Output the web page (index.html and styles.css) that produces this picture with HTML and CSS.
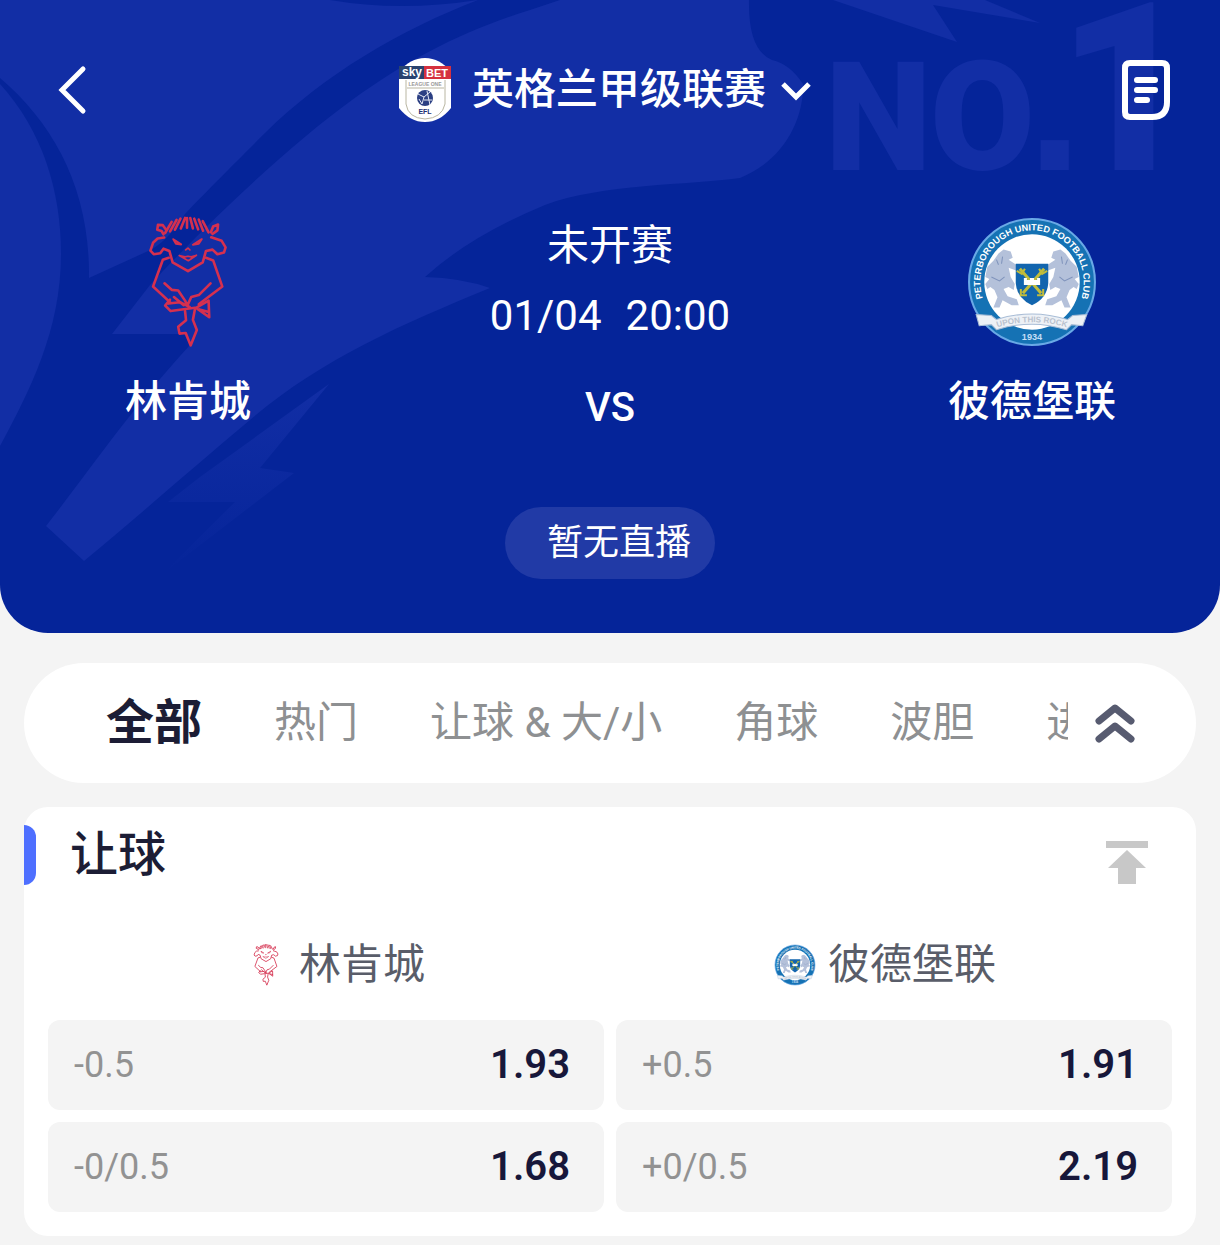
FILE: index.html
```html
<!DOCTYPE html>
<html lang="zh-CN">
  <head>
    <meta charset="UTF-8" />
    <meta name="viewport" content="width=device-width, initial-scale=1.0" />
    <title>林肯城 VS 彼德堡联</title>
    <link rel="stylesheet" href="styles.css">
  </head>
  <body>
    <header class="hero">
      <svg class="hero-bg" viewBox="0 0 1220 633" preserveAspectRatio="xMidYMin slice" aria-hidden="true">
        <defs>
          <linearGradient id="fade" x1="0" y1="0" x2="0" y2="1">
            <stop offset="0" stop-color="#122ea5" />
            <stop offset="1" stop-color="#122ea5" stop-opacity="0" />
          </linearGradient>
        </defs>
        <g fill="#122ea5">
          <path d="M0 84C42 130 61 190 61 254C61 330 30 390 0 446Z" />
          <path d="M0 0H330Q400 12 478 0C400 30 325 74 265 133C230 168 208 190 185 214Q166 244 146 252L89 278C90 190 55 125 0 78Z" />
          <path d="M112 334L150 285C210 220 290 145 352 100C410 58 465 30 530 10L560 0H749Q748 50 772 60Q790 64 803 84C804 118 785 160 740 178C690 185 600 184 545 205Q470 236 425 277Q462 278 490 288C400 325 320 360 250 420C190 470 140 515 84 561L46 526C90 470 130 410 190 345L184 334Z" />
          <path d="M833 0L957 42L933 5L1040 23L985 0Z" />
          <text class="no1" x="825" y="170">N<tspan x="930">O</tspan><tspan class="no1-dot" x="1027">.</tspan><tspan class="no1-big" x="1057">1</tspan></text>
        </g>
        <path fill="url(#fade)" d="M329 384L260 468L294 473L160 576L235 502H168L200 477Z" />
      </svg>

      <nav class="topbar">
        <button class="icon-btn" aria-label="返回">
          <svg width="48" height="60" viewBox="0 0 48 60" fill="none" stroke="#fff" stroke-width="5" stroke-linecap="round"><path d="M33 9L12 30L33 51" /></svg>
        </button>
        <button class="league">
          <svg width="54" height="64" viewBox="0 0 54 64">
            <path d="M1 14Q12 0 27 0Q42 0 53 14V50Q42 64 27 64Q12 64 1 50Z" fill="#fff" />
            <path d="M1 8H26V21H1Z" fill="#29436f" />
            <path d="M26 8H53V21H26Z" fill="#d5313f" />
            <text class="crest-text" x="4" y="18" font-size="12" fill="#fff">sky</text>
            <text class="crest-text" x="28" y="19" font-size="11" fill="#fff">BET</text>
            <text class="crest-text" x="27" y="28" font-size="5" fill="#999" text-anchor="middle">LEAGUE ONE</text>
            <path d="M8 22V46Q10 60 27 61Q44 60 47 46V22M9 30H46" fill="none" stroke="#b9b6a2" stroke-width="1" />
            <circle cx="27" cy="40" r="8" fill="#2b3f83" />
            <path d="M20 36L26 39L24 46M26 39L32 34M26 42L34 42M21 41L24 46M29 33L32 47" stroke="#e5e9f4" stroke-width="1" fill="none" />
            <text class="crest-text" x="27" y="56" font-size="7" fill="#1e2f72" text-anchor="middle">EFL</text>
          </svg>
          <span class="league-name">英格兰甲级联赛</span>
          <svg width="42" height="30" viewBox="0 0 42 30" fill="none" stroke="#fff" stroke-width="5"><path d="M3 9L16 22L29 9" /></svg>
        </button>
        <button class="icon-btn" aria-label="注单">
          <svg width="48" height="60" viewBox="0 0 48 60" fill="none" stroke="#fff" stroke-width="6" stroke-linecap="round"><path d="M8 3H40Q45 3 45 8V42Q45 57 30 57H8Q3 57 3 52V8Q3 3 8 3ZM15 20H33M15 30H33M15 40H25" /></svg>
        </button>
      </nav>

      <div class="match">
        <div class="team">
          <svg class="team-logo" viewBox="112 44 246 404">
            <g id="lincoln" fill="none" stroke="#d5304f" stroke-width="8" stroke-linejoin="round" stroke-linecap="round">
              <path d="M165 96L185 62M180 91L200 56M195 86L212 52M213 82L226 50M232 80V50M250 82L242 50M266 85L254 52M281 89L268 55M298 94L280 60" />
              <path d="M160 100L154 90L141 86L143 71L158 72L168 86M305 94L312 76L327 70L325 88L310 99" />
              <path d="M162 110L142 113L128 126L120 150L130 161L150 158L160 144L178 151L188 186L235 213L280 186L290 151L310 147L325 161L345 156L350 140L338 120L306 109" />
              <path d="M190 115L214 131L198 129ZM277 115L250 132L268 129Z" stroke-width="6" />
              <path d="M228 148L235 142L241 148M208 165L226 169L235 167L245 169L261 164L236 181Z" stroke-width="5" />
              <path d="M176 172L158 178L128 260L182 310M290 172L312 180L340 260L268 314" />
              <path d="M163 250L185 270L205 272L226 303L233 318M304 250L268 286L245 292L234 316M192 292L222 317" />
              <path d="M180 300L165 318L182 335L262 324L298 303L300 354L262 327M175 312L210 308L240 322M270 330L298 338" />
              <path d="M226 335L229 363L205 383L209 404L228 402L243 440L262 393L250 362L256 330" />
            </g>
          </svg>
          <span class="team-name">林肯城</span>
        </div>
        <div class="info">
          <p>未开赛</p>
          <p class="time"><span>01/04</span><span>20:00</span></p>
          <p class="vs">VS</p>
        </div>
        <div class="team">
          <svg class="team-logo" viewBox="0 0 130 130">
            <g id="peterborough">
              <circle cx="65" cy="65" r="62" fill="#1572b4" stroke="#69a9e6" stroke-width="2" />
              <circle cx="65" cy="65" r="47" fill="#fff" />
              <path id="ring" d="M18 85A51 51 0 1 1 112 85" fill="none" />
              <text class="crest-text" font-size="9" fill="#fff" text-anchor="middle">
                <textPath href="#ring" startOffset="50%">PETERBOROUGH UNITED FOOTBALL CLUB</textPath>
              </text>
              <g id="lion">
                <path fill="#b4c1da" d="M32 37L37 33L44 35L46 41L42 43L51 49L50 54L42 51L44 60L48 67L47 73L42 70L37 72L41 79L50 82L52 88L45 88L36 83L33 90L27 90L31 80L28 73L24 70L21 72L19 67L23 62L19 60L21 50L27 44Z" />
                <path d="M30 43L32 48M25 60L33 64L38 60M36 40L35 47" stroke="#7f93bb" stroke-width="1" fill="none" />
              </g>
              <use href="#lion" transform="matrix(-1 0 0 1 130 0)" />
              <path d="M49 47H81V66Q80 81 65 88Q50 81 49 66Z" fill="#1265ae" />
              <path d="M53 52L74 76M77 52L56 76" stroke="#c2bd3b" stroke-width="3" />
              <path d="M50 54L55 57L58 52M80 54L75 57L72 52M54 72V78H60M76 72V78H70" stroke="#c2bd3b" stroke-width="2" fill="none" />
              <path d="M57 61H60V63H63V61H67V63H70V61H73V68H57Z" fill="#fff" />
              <path d="M10 97L25 98L30 102Q65 91 100 102L105 98L119 97L115 108L104 107L99 112Q65 101 30 112L25 107L13 108Z" fill="#edf1f6" stroke="#a9bdd6" stroke-width="1" />
              <path id="motto" d="M30 110Q65 99 100 110" fill="none" />
              <text class="crest-text" font-size="8" fill="#b9c2ce" text-anchor="middle">
                <textPath href="#motto" startOffset="50%">UPON THIS ROCK</textPath>
              </text>
              <text class="crest-text" x="65" y="122" font-size="9" fill="#c5def5" text-anchor="middle">1934</text>
            </g>
          </svg>
          <span class="team-name">彼德堡联</span>
        </div>
      </div>

      <div class="live">暂无直播</div>
    </header>

    <main>
      <nav class="tabs">
        <div class="tab-list">
          <button class="tab active">全部</button>
          <button class="tab">热门</button>
          <button class="tab">让球 &amp; 大/小</button>
          <button class="tab">角球</button>
          <button class="tab">波胆</button>
          <button class="tab">进球</button>
        </div>
        <button class="icon-btn fold" aria-label="收起">
          <svg width="48" height="48" viewBox="0 0 48 48" fill="none" stroke="#575b70" stroke-width="7" stroke-linecap="round" stroke-linejoin="round"><path d="M7 22L23 9L39 22M7 40L23 27L39 40" /></svg>
        </button>
      </nav>

      <section class="card">
        <div class="card-head">
          <h2>让球</h2>
          <button class="to-top" aria-label="置顶">
            <svg width="42" height="44" viewBox="0 0 42 44" fill="#c8c8c8"><path d="M0 0H42V7H0ZM21 9L40 27H30V43H12V27H2Z" /></svg>
          </button>
        </div>
        <div class="sides">
          <div class="side"><svg class="side-logo" viewBox="112 44 246 404"><use href="#lincoln" /></svg>林肯城</div>
          <div class="side"><svg class="side-logo" viewBox="0 0 130 130"><use href="#peterborough" /></svg>彼德堡联</div>
        </div>
        <div class="odds">
          <button class="odd"><span>-0.5</span><b>1.93</b></button>
          <button class="odd"><span>+0.5</span><b>1.91</b></button>
          <button class="odd"><span>-0/0.5</span><b>1.68</b></button>
          <button class="odd"><span>+0/0.5</span><b>2.19</b></button>
        </div>
      </section>
    </main>
  </body>
</html>
```

FILE: styles.css
```css
*{
  box-sizing: border-box;
}
body{
  margin: 0;
  background-color: #f4f4f4;
  font-family: Roboto, "Noto Sans CJK SC", sans-serif;
  font-size: 42px;
  line-height: 60px;
}
button{
  border: none;
  padding: 0;
  background: none;
  font: inherit;
  color: inherit;
  cursor: pointer;
}
svg{
  display: block;
  flex-shrink: 0;
}
p, h2{
  margin: 0;
}
.crest-text{
  font-family: "Liberation Sans", sans-serif;
  font-weight: bold;
}

/* header */
.hero{
  position: relative;
  overflow: hidden;
  padding-bottom: 54px;
  border-radius: 0 0 48px 48px;
  background-color: #052499;
  color: #fff;
}
.hero-bg{
  position: absolute;
  top: 0;
  left: 0;
  width: 100%;
  height: 100%;
}
.no1{
  font-size: 152px;
  font-weight: 900;
}
.no1-dot{
  font-family: "Liberation Sans", sans-serif;
  font-size: 200px;
}
.no1-big{
  font-size: 236px;
}
.topbar{
  position: relative;
  display: flex;
  align-items: center;
  justify-content: space-between;
  height: 180px;
  padding: 0 50px;
}
.league{
  display: flex;
  align-items: center;
}
.league-name{
  margin: 0 14px 0 20px;
  font-weight: 500;
}
.match{
  position: relative;
  display: flex;
  justify-content: space-between;
  padding: 36px 64px 0;
}
.team{
  display: flex;
  flex-direction: column;
  align-items: center;
  gap: 24px;
  width: 248px;
}
.team-logo{
  width: 132px;
  height: 132px;
}
.team-name{
  font-weight: 500;
}
.info{
  text-align: center;
}
.time{
  display: flex;
  justify-content: center;
  gap: 24px;
  margin: 10px 0 32px;
}
.vs{
  font-size: 40px;
  font-weight: 500;
}
.live{
  position: relative;
  width: fit-content;
  margin: 51px auto 0;
  padding: 0 24px 0 42px;
  border-radius: 36px;
  background-color: #213aa6;
  font-size: 36px;
  line-height: 72px;
}
.match + .live{
  margin-top: 69px;
}

/* market tabs */
main{
  padding: 30px 24px 9px;
}
.tabs{
  display: flex;
  align-items: center;
  height: 120px;
  padding: 0 56px 0 82px;
  border-radius: 60px;
  background-color: #fff;
}
.tab-list{
  display: flex;
  flex: 1;
  align-items: center;
  gap: 72px;
  overflow: hidden;
}
.tab{
  flex-shrink: 0;
  color: #8e9092;
  white-space: nowrap;
}
.active{
  color: #1c1d35;
  font-size: 48px;
  font-weight: bold;
}
.fold{
  margin-left: 24px;
}

/* odds card */
.card{
  margin-top: 24px;
  padding: 18px 24px 24px;
  border-radius: 24px;
  background-color: #fff;
}
.card-head{
  display: flex;
  align-items: flex-end;
  margin-left: -24px;
  padding-right: 24px;
}
.card-head::before{
  content: "";
  width: 12px;
  height: 60px;
  border-radius: 0 12px 12px 0;
  background-color: #4e6fff;
}
.card-head h2{
  margin-left: 34px;
  color: #1c1d35;
  font-size: 48px;
  font-weight: 500;
}
.to-top{
  margin-left: auto;
}
.sides{
  display: grid;
  grid-template-columns: 1fr 1fr;
  padding: 50px 12px 25px;
}
.side{
  display: flex;
  align-items: center;
  justify-content: center;
  gap: 12px;
  color: #595d69;
}
.side-logo{
  width: 42px;
  height: 42px;
}
.odds{
  display: grid;
  grid-template-columns: 1fr 1fr;
  gap: 12px;
}
.odd{
  display: flex;
  align-items: center;
  justify-content: space-between;
  height: 90px;
  padding: 0 34px 0 26px;
  border-radius: 12px;
  background-color: #f4f4f4;
  color: #929292;
  font-size: 36px;
}
.odd b{
  color: #17173a;
  font-size: 40px;
  font-weight: 600;
}
```
